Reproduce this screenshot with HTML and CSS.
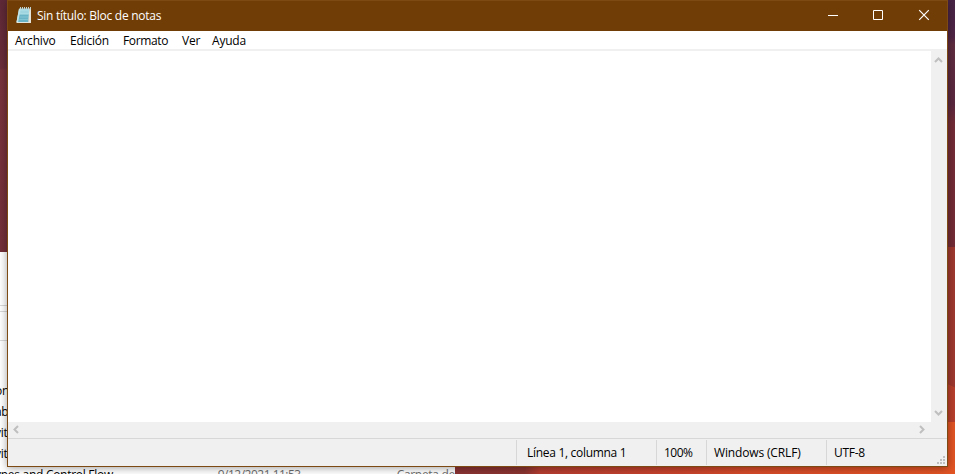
FILE: index.html
```html
<!DOCTYPE html>
<html lang="es">
<head>
<meta charset="utf-8">
<title>Sin título: Bloc de notas</title>
<link rel="stylesheet" href="styles.css">
</head>
<body>
<div class="desktop">
  <svg class="wallpaper" width="955" height="474" viewBox="0 0 955 474">
    <defs>
      <linearGradient id="left" x1="0" y1="0" x2="0" y2="1"><stop offset="0" stop-color="#5f2938"/><stop offset=".27" stop-color="#6a2d39"/><stop offset=".28" stop-color="#78333c"/><stop offset="1" stop-color="#732f3a"/></linearGradient>
      <linearGradient id="right" x1="0" y1="0" x2="0" y2="1"><stop offset="0" stop-color="#472346"/><stop offset=".15" stop-color="#502546"/><stop offset=".18" stop-color="#602c40"/><stop offset=".42" stop-color="#5b2840"/><stop offset=".5" stop-color="#732c37"/><stop offset="1" stop-color="#742c36"/></linearGradient>
      <linearGradient id="base" x1="0" y1="0" x2="1" y2="0"><stop offset="0" stop-color="#8a3233"/><stop offset=".14" stop-color="#8a3431"/><stop offset=".17" stop-color="#b53d30"/><stop offset=".45" stop-color="#c8432c"/><stop offset=".6" stop-color="#d64b29"/><stop offset="1" stop-color="#e25424"/></linearGradient>
    </defs>
    <rect width="8" height="252" fill="url(#left)"/>
    <rect x="947" width="8" height="247" fill="url(#right)"/>
    <path d="M947 247h8v141l-8-4z" fill="#9f382f"/>
    <path d="M947 384l8 4v36h-8z" fill="#b93f2d"/>
    <path d="M947 422h8v52h-8z" fill="#e25424"/>
    <path d="M455 466h500v8H455z" fill="url(#base)"/>
  </svg>
  <section class="explorer">
    <div class="edge"><i></i><i></i><i></i></div>
    <div class="row"><span>on</span></div>
    <div class="row"><span>ab</span></div>
    <div class="row"><span>vit</span></div>
    <div class="row"><span>vit</span></div>
    <div class="row wide"><span class="file">ypes and Control Flow</span><span class="date">9/12/2021 11:53</span><span class="kind">Carpeta de</span></div>
  </section>
  <main class="window">
    <header class="titlebar">
      <svg class="app-icon" width="16" height="17" viewBox="0 0 16 17">
        <path d="M3 1.500h10.500L12.500 15H.5z" fill="#a9dbe5"/>
        <path d="M2.500 7.500h10.400l-.6 7.500H.7z" fill="#69b4c6"/>
        <path d="M3 2h1.500L2.200 15H.5z" fill="#c4e4e8"/>
        <path d="M13.300 1.500H15V16H.5v-1h11.800z" fill="#e3e5dc"/>
        <path d="M4.500 5h8M4 7.500h8.500M3.700 10H12M3.300 12.500H12" stroke="#8fcbd7" stroke-width=".7"/>
        <path d="M4.500 0v2.500M6.500 0v2.500M8.500 0v2.500M10.500 0v2.500M12.500 0v2.500M14.500 0v2.500" stroke="#bfd3d0"/>
      </svg>
      <h1>Sin título: Bloc de notas</h1>
      <div class="controls">
        <svg width="46" height="30"><path d="M19 14.500h10" stroke="#fff"/></svg>
        <svg width="46" height="30"><path d="M18.500 9.500h9v9h-9z" fill="none" stroke="#fff"/></svg>
        <svg width="46" height="30"><path d="M18.200 9.200l9.600 9.600M27.800 9.200l-9.600 9.600" stroke="#fff" stroke-width="1.200"/></svg>
      </div>
    </header>
    <nav class="menu"><span class="archivo">Archivo</span><span class="edicion">Edición</span><span class="formato">Formato</span><span class="ver">Ver</span><span>Ayuda</span></nav>
    <div class="workspace">
      <div class="editor"></div>
      <div class="vscroll">
        <svg width="16" height="17"><path d="M4 11l3.500-3.500L11 11"/></svg>
        <svg width="16" height="17"><path d="M4 6l3.500 3.500L11 6"/></svg>
      </div>
    </div>
    <div class="hscroll">
      <svg width="16" height="16"><path d="M10 4L6.500 7.500L10 11"/></svg>
      <svg width="16" height="16"><path d="M6 4l3.500 3.500L6 11"/></svg>
    </div>
    <footer class="status">
      <span class="blank"></span><span class="position">Línea 1, columna 1</span><span class="zoom">100%</span><span class="ending">Windows (CRLF)</span><span class="encoding">UTF-8</span>
      <svg class="grip" width="8" height="8"><path d="M6 0h2v2H6zM3 3h2v2H3zM6 3h2v2H6zM0 6h2v2H0zM3 6h2v2H3zM6 6h2v2H6z"/></svg>
    </footer>
  </main>
</div>
</body>
</html>
```
FILE: styles.css
```css
* { box-sizing: border-box; }
body { margin: 0; overflow: hidden; font: 12px/16px "Open Sans", "Noto Sans", sans-serif; color: #000; }
.desktop { position: relative; width: 955px; height: 474px; overflow: hidden; background: #db5122; }
svg { display: block; flex: none; }
.wallpaper { position: absolute; left: 0; top: 0; }
.explorer { position: absolute; left: 0; top: 252px; width: 455px; height: 222px; overflow: hidden; background: #fff; }
.edge { height: 128px; padding-top: 53px; }
.edge i { display: block; height: 1px; margin-bottom: 5px; background: #d9d9d9; }
.edge i:nth-child(2) { margin-bottom: 28px; }
.row { display: flex; height: 21px; line-height: 21px; white-space: nowrap; letter-spacing: -.3px; }
.row > span { margin-left: -5px; }
.wide > .file { width: 225px; letter-spacing: -.28px; }
.wide > .date { width: 180px; margin-left: -1px; color: #6d6d6d; letter-spacing: -.5px; }
.wide > .kind { margin-left: 0; color: #6d6d6d; }
.window { position: absolute; left: 7px; top: 0; width: 941px; height: 467px; display: flex; flex-direction: column; border: 1px solid #7d4a14; background: #fff; box-shadow: 0 1px 8px rgba(0,0,0,.38); }
.titlebar { height: 30px; flex: none; display: flex; align-items: center; padding-left: 8px; background: #703d06; color: #fff; }
.app-icon { margin-top: -2px; }
.titlebar h1 { margin: 0 0 0 5px; font-size: 12px; line-height: 16px; font-weight: 400; letter-spacing: -.27px; }
.controls { display: flex; margin-left: auto; }
.menu { height: 20px; flex: none; display: flex; padding-left: 7px; line-height: 20px; letter-spacing: -.2px; border-bottom: 2px solid #f0f0f0; }
.archivo { width: 55px; }
.edicion { width: 53px; }
.formato { width: 59px; letter-spacing: -.35px; }
.ver { width: 30px; }
.workspace { display: flex; height: 371px; flex: none; }
.editor { flex: 1; background: #fff; }
.vscroll { width: 16px; display: flex; flex-direction: column; justify-content: space-between; background: #f0f0f0; }
.hscroll { height: 16px; flex: none; display: flex; justify-content: space-between; padding-right: 17px; background: #f0f0f0; }
.vscroll path, .hscroll path { fill: none; stroke: #bfbfbf; stroke-width: 2; }
.status { flex: 1; position: relative; display: flex; padding: 1px 0; background: #f0f0f0; border-top: 1px solid #d7d7d7; line-height: 25px; white-space: nowrap; letter-spacing: -.3px; }
.status span { border-right: 1px solid #d7d7d7; }
.blank { width: 509px; }
.position { width: 140px; padding-left: 10px; }
.zoom { width: 50px; padding-left: 7px; }
.status .zoom { letter-spacing: -.5px; }
.ending { width: 120px; padding-left: 7px; letter-spacing: -.15px; }
.status .encoding { padding-left: 7px; border: 0; }
.grip { position: absolute; right: 2px; bottom: 2px; fill: #bfbfbf; }
```
